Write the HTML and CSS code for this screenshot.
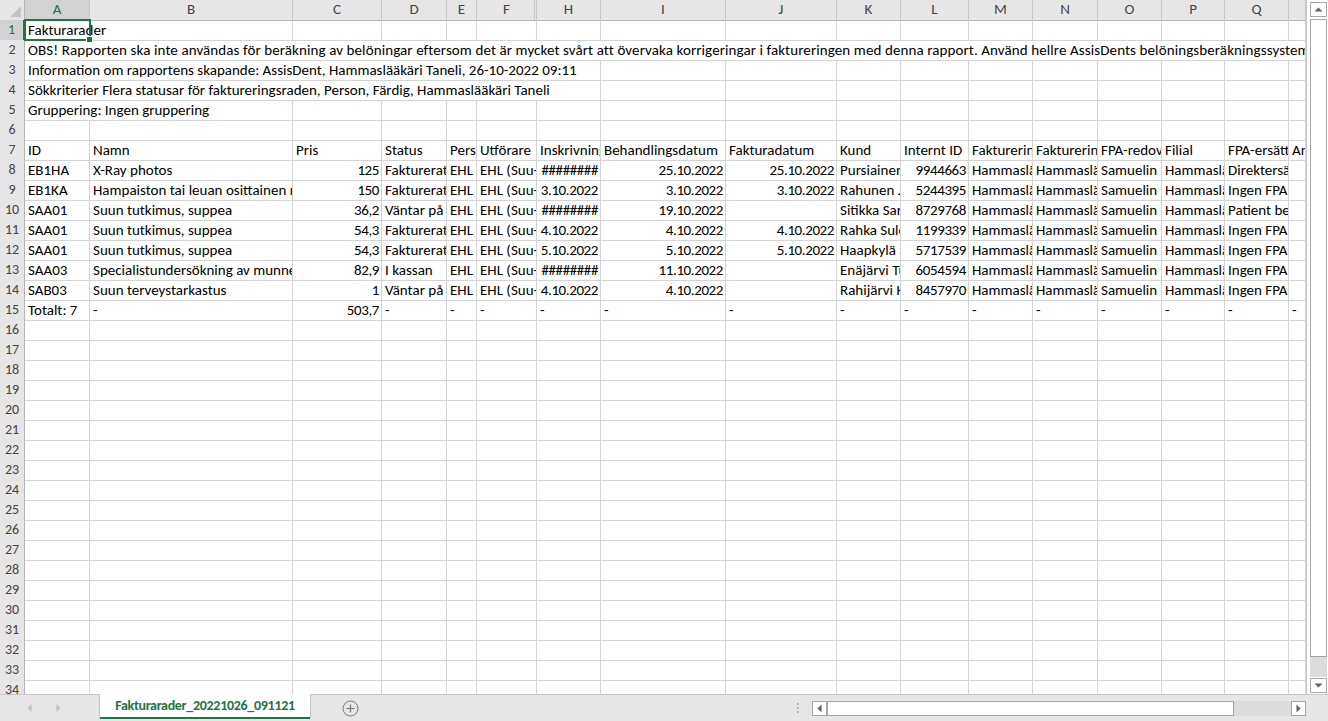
FILE: index.html
```html
<!DOCTYPE html>
<html lang="sv">
<head>
  <meta charset="UTF-8">
  <meta name="viewport" content="width=device-width, initial-scale=1.0">
  <title>Fakturarader_20221026_091121</title>
  <link rel="stylesheet" href="styles.css">
</head>
<body>
  <div class="workbook">
    <div class="sheet-area">
      <div class="grid" id="grid">
        <div class="row">
          <div class="corner">
            <svg width="24" height="19" viewBox="0 0 24 19"><polygon points="10,17 21,17 21,6" fill="#c4c4c4"/></svg>
          </div>
        </div>
      </div>

      <div class="vscroll">
        <div class="sb-btn">
          <svg width="9" height="5" viewBox="0 0 9 5"><polygon points="0.5,4.5 8.5,4.5 4.5,0.5" fill="#606060"/></svg>
        </div>
        <div class="sb-thumb-v"></div>
        <div class="sb-track-v"></div>
        <div class="sb-btn">
          <svg width="9" height="5" viewBox="0 0 9 5"><polygon points="0.5,0.5 8.5,0.5 4.5,4.5" fill="#606060"/></svg>
        </div>
      </div>
    </div>

    <div class="tabbar">
      <div class="tab-nav">
        <svg width="5" height="8" viewBox="0 0 5 8"><polygon points="4.5,0 4.5,8 0.5,4" fill="#c0c0c0"/></svg>
        <svg width="5" height="8" viewBox="0 0 5 8"><polygon points="0.5,0 0.5,8 4.5,4" fill="#c0c0c0"/></svg>
      </div>
      <div class="sheet-tab">Fakturarader_20221026_091121</div>
      <div class="add-sheet">
        <svg width="17" height="17" viewBox="0 0 17 17">
          <circle cx="8.5" cy="8.5" r="7.5" fill="none" stroke="#7a7a7a" stroke-width="1"/>
          <path d="M8.5 4.5v8M4.5 8.5h8" stroke="#7a7a7a" stroke-width="1.2"/>
        </svg>
      </div>
      <div class="tab-split">
        <svg width="3" height="12" viewBox="0 0 3 12"><rect x="1" y="1" width="1.5" height="2" fill="#a6a6a6"/><rect x="1" y="5" width="1.5" height="2" fill="#a6a6a6"/><rect x="1" y="9" width="1.5" height="2" fill="#a6a6a6"/></svg>
      </div>
      <div class="hscroll">
        <div class="sb-btn">
          <svg width="5" height="9" viewBox="0 0 5 9"><polygon points="4.5,0.5 4.5,8.5 0.5,4.5" fill="#606060"/></svg>
        </div>
        <div class="sb-thumb-h"></div>
        <div class="sb-track-h"></div>
        <div class="sb-btn">
          <svg width="5" height="9" viewBox="0 0 5 9"><polygon points="0.5,0.5 0.5,8.5 4.5,4.5" fill="#606060"/></svg>
        </div>
      </div>
    </div>
  </div>

  <script>
    var letters = ['A', 'B', 'C', 'D', 'E', 'F', 'H', 'I', 'J', 'K', 'L', 'M', 'N', 'O', 'P', 'Q', ''];
    var grid = document.getElementById('grid');
    var headRow = grid.firstElementChild;

    function el(tag, cls, text) {
      var e = document.createElement(tag);
      e.className = cls;
      if (text) e.textContent = text;
      return e;
    }

    letters.forEach(function (l, i) {
      var c = el('div', 'col-head', l);
      if (i === 0) c.className += ' sel';
      if (l === 'F') c.className += ' g-edge'; // column G is hidden
      headRow.appendChild(c);
    });

    // texts that run over several cells
    var wide = {
      1: ['Fakturarader', 2],
      2: ['OBS! Rapporten ska inte användas för beräkning av belöningar eftersom det är mycket svårt att övervaka korrigeringar i faktureringen med denna rapport. Använd hellre AssisDents belöningsberäkningssystem.', 17],
      3: ['Information om rapportens skapande: AssisDent, Hammaslääkäri Taneli, 26-10-2022 09:11', 7],
      4: ['Sökkriterier Flera statusar för faktureringsraden, Person, Färdig, Hammaslääkäri Taneli', 7],
      5: ['Gruppering: Ingen gruppering', 2]
    };

    var ehl = 'EHL (Suun terveydenhuolto)';
    var ehl2 = 'EHL (Suu- ja hammassairaudet)';
    var doc = 'Hammaslääkäri Taneli';
    var clinic = 'Samuelin hammaslääkäriasema';

    var data = {
      7: ['ID', 'Namn', 'Pris', 'Status', 'Personal', 'Utförare', 'Inskrivningsdatum', 'Behandlingsdatum', 'Fakturadatum', 'Kund', 'Internt ID', 'Faktureringsstatus', 'Faktureringsmottagare', 'FPA-redovisning', 'Filial', 'FPA-ersättning', 'Anteckningar'],
      8: ['EB1HA', 'X-Ray photos', '125', 'Fakturerat', ehl, ehl2, '########', '25.10.2022', '25.10.2022', 'Pursiainen Eetu', '9944663', doc, doc, clinic, doc, 'Direktersättning', ''],
      9: ['EB1KA', 'Hampaiston tai leuan osittainen röntgenkuvaus', '150', 'Fakturerat', ehl, ehl2, '3.10.2022', '3.10.2022', '3.10.2022', 'Rahunen Juha', '5244395', doc, doc, clinic, doc, 'Ingen FPA-ersättning', ''],
      10: ['SAA01', 'Suun tutkimus, suppea', '36,2', 'Väntar på betalning', ehl, ehl2, '########', '19.10.2022', '', 'Sitikka Sari', '8729768', doc, doc, clinic, doc, 'Patient betalar', ''],
      11: ['SAA01', 'Suun tutkimus, suppea', '54,3', 'Fakturerat', ehl, ehl2, '4.10.2022', '4.10.2022', '4.10.2022', 'Rahka Sulo', '1199339', doc, doc, clinic, doc, 'Ingen FPA-ersättning', ''],
      12: ['SAA01', 'Suun tutkimus, suppea', '54,3', 'Fakturerat', ehl, ehl2, '5.10.2022', '5.10.2022', '5.10.2022', 'Haapkylä Sami', '5717539', doc, doc, clinic, doc, 'Ingen FPA-ersättning', ''],
      13: ['SAA03', 'Specialistundersökning av munnen', '82,9', 'I kassan', ehl, ehl2, '########', '11.10.2022', '', 'Enäjärvi Tuula', '6054594', doc, doc, clinic, doc, 'Ingen FPA-ersättning', ''],
      14: ['SAB03', 'Suun terveystarkastus', '1', 'Väntar på betalning', ehl, ehl2, '4.10.2022', '4.10.2022', '', 'Rahijärvi Kalle', '8457970', doc, doc, clinic, doc, 'Ingen FPA-ersättning', ''],
      15: ['Totalt: 7', '-', '503,7', '-', '-', '-', '-', '-', '-', '-', '-', '-', '-', '-', '-', '-', '-']
    };

    for (var n = 1; n <= 34; n++) {
      var row = el('div', 'row');
      row.appendChild(el('div', 'row-head' + (n === 1 ? ' sel' : ''), String(n)));
      var rest = 17;

      if (wide[n]) {
        var w = el('div', 'cell span' + wide[n][1], wide[n][0]);
        if (n === 1) {
          w.className += ' active';
          w.appendChild(el('div', 'selection'));
          w.appendChild(el('div', 'fill-handle'));
        }
        row.appendChild(w);
        rest = 17 - wide[n][1];
      }

      for (var i = 17 - rest; i < 17; i++) {
        var v = data[n] ? data[n][i] : '';
        var cls = 'cell';
        if (/^[\d.,#]+$/.test(v)) cls += ' num';
        row.appendChild(el('div', cls, v));
      }
      grid.appendChild(row);
    }
  </script>
</body>
</html>
```

FILE: styles.css
```css
* {
  box-sizing: border-box;
}

body {
  margin: 0;
  font-family: Calibri, Carlito, "Liberation Sans", sans-serif;
  font-size: 15px;
  color: #000;
  background: #fff;
  overflow: hidden;
}

.workbook {
  width: 1328px;
  height: 721px;
  display: flex;
  flex-direction: column;
}

.sheet-area {
  height: 694px;
  display: flex;
}

.grid {
  width: 1307px;
  overflow: hidden;
  border-right: 1px solid #c6c6c6;
}

.row {
  display: grid;
  grid-template-columns: 25px 65px 203px 89px 65px 30px 60px 64px 125px 111px 64px 68px 64px 65px 64px 63px 64px 1fr;
  height: 20px;
}

/* headers */
.corner,
.col-head,
.row-head {
  background: #e6e6e6;
  color: #444;
}

.corner {
  border-right: 1px solid #b5b5b5;
  border-bottom: 1px solid #b5b5b5;
}

.corner svg {
  display: block;
}

.col-head {
  border-right: 1px solid #c8c8c8;
  border-bottom: 1px solid #b5b5b5;
  text-align: center;
  line-height: 19px;
}

.col-head.g-edge {
  box-shadow: inset -1px 0 0 #e6e6e6, inset -2px 0 0 #c8c8c8;
}

.row-head {
  border-right: 1px solid #b5b5b5;
  border-bottom: 1px solid #c8c8c8;
  text-align: center;
  font-size: 14px;
  line-height: 20px;
}

.col-head.sel,
.row-head.sel {
  background: #d2d2d2;
  color: #217346;
}

.col-head.sel {
  border-bottom: 2px solid #217346;
}

.row-head.sel {
  border-right: 2px solid #217346;
}

/* cells */
.cell {
  border-right: 1px solid #d4d4d4;
  border-bottom: 1px solid #d4d4d4;
  padding: 0 2px 0 3px;
  line-height: 20px;
  white-space: nowrap;
  overflow: hidden;
}

.cell.num {
  text-align: right;
  letter-spacing: -0.4px;
}

.span2 {
  grid-column: span 2;
}

.span7 {
  grid-column: span 7;
}

.span17 {
  grid-column: span 17;
  letter-spacing: 0.1px;
}

.cell.active {
  position: relative;
  overflow: visible;
}

.selection {
  position: absolute;
  left: -1px;
  top: -1px;
  width: 67px;
  height: 22px;
  border: 2px solid #217346;
  z-index: 2;
}

.fill-handle {
  position: absolute;
  left: 61px;
  top: 16px;
  width: 7px;
  height: 7px;
  background: #217346;
  border: 1px solid #fff;
  z-index: 3;
}

/* scrollbars */
.vscroll {
  width: 21px;
  background: #fff;
  padding: 2px 1px 1px 3px;
  display: flex;
  flex-direction: column;
}

.sb-btn {
  border: 1px solid #a6a6a6;
  background: #fff;
  display: flex;
  align-items: center;
  justify-content: center;
}

.vscroll .sb-btn {
  height: 15px;
}

.sb-thumb-v {
  height: 638px;
  margin-top: 2px;
  border: 1px solid #a6a6a6;
  background: #fff;
}

.sb-track-v {
  flex: 1;
  background: #dcdcdc;
  margin-bottom: 1px;
}

.tabbar {
  height: 27px;
  background: #e6e6e6;
  border-top: 1px solid #c6c6c6;
  display: flex;
  align-items: flex-start;
}

.tab-nav {
  width: 100px;
  height: 26px;
  display: flex;
  align-items: center;
  gap: 24px;
  padding-left: 27px;
}

.sheet-tab {
  margin-top: -1px;
  width: 210px;
  height: 25px;
  background: #fff;
  border-bottom: 2px solid #217346;
  box-shadow: 1px 0 0 #c6c6c6, -1px 0 0 #c6c6c6;
  color: #217346;
  font-weight: bold;
  font-size: 14px;
  letter-spacing: -0.3px;
  text-align: center;
  line-height: 24px;
}

.add-sheet {
  margin-left: 32px;
  margin-top: 5px;
}

.add-sheet svg,
.tab-split svg {
  display: block;
}

.tab-split {
  margin-left: 437px;
  margin-top: 7px;
}

.hscroll {
  margin-left: 13px;
  margin-top: 6px;
  width: 494px;
  height: 15px;
  display: flex;
}

.hscroll .sb-btn {
  width: 15px;
}

.sb-thumb-h {
  width: 407px;
  border: 1px solid #a6a6a6;
  background: #fff;
}

.sb-track-h {
  flex: 1;
  background: #dcdcdc;
}
```
